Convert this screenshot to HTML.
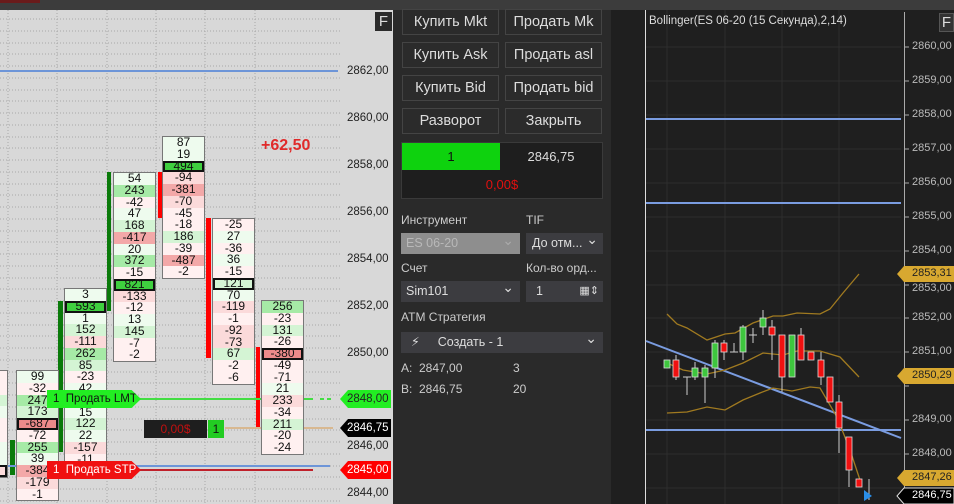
<!DOCTYPE html>
<html><head><meta charset="utf-8"><style>
*{margin:0;padding:0;box-sizing:border-box}
body{width:954px;height:504px;overflow:hidden;background:#2a2a2a;font-family:"Liberation Sans",sans-serif;position:relative}
.a{position:absolute}
#L{left:0;top:10px;width:393px;height:494px;background:#d8d8d8;overflow:hidden}
.cl{position:absolute;width:43px;border:1px solid #777;background:#fff}
.cl div{height:11.75px;line-height:11.75px;font-size:12px;text-align:center;color:#111;white-space:nowrap;overflow:hidden}
.g1{background:#eefbee}.g2{background:#d4f4d4}.g3{background:#a6eaa6}
.r1{background:#fff0f0}.r2{background:#fbdada}.r3{background:#f3a8a8}
.bd{outline:2px solid #111;outline-offset:-2px}
.gb{background:#3fcf3f}.rb{background:#ec8a8a}
.pl{position:absolute;left:347px;font-size:11.5px;color:#222}
.btn{position:absolute;width:97px;height:26px;border:1px solid #444;background:#2b2b2b;color:#ddd;font-size:14.5px;text-align:center;line-height:24px;white-space:nowrap;overflow:hidden}
.lbl{position:absolute;color:#ccc;font-size:12px}
.rl{position:absolute;left:912px;font-size:11px;color:#bbb;white-space:nowrap}
.ord{position:absolute;width:94px;height:18px;font-size:11.5px;line-height:18px;padding-left:6px;white-space:nowrap;clip-path:polygon(0 0,90% 0,100% 50%,90% 100%,0 100%)}
</style></head><body>
<div class="a" style="left:0;top:0;width:954px;height:10px;background:#3c3c3c"></div>
<div class="a" style="left:0;top:0;width:40px;height:3px;background:#6a1b1b"></div>
<div id="L" class="a">
<svg class="a" style="left:0;top:0" width="393" height="494">
<g stroke="#a8a8a8" stroke-dasharray="1 2" stroke-width="1">
<line x1="8" y1="0" x2="8" y2="494"/><line x1="57" y1="0" x2="57" y2="494"/><line x1="107" y1="0" x2="107" y2="494"/><line x1="156" y1="0" x2="156" y2="494"/><line x1="205" y1="0" x2="205" y2="494"/><line x1="255" y1="0" x2="255" y2="494"/>
<line x1="0" y1="9" x2="340" y2="9"/><line x1="0" y1="21" x2="340" y2="21"/><line x1="0" y1="33" x2="340" y2="33"/><line x1="0" y1="44" x2="340" y2="44"/><line x1="0" y1="56" x2="340" y2="56"/><line x1="0" y1="68" x2="340" y2="68"/><line x1="0" y1="80" x2="340" y2="80"/><line x1="0" y1="91" x2="340" y2="91"/><line x1="0" y1="103" x2="340" y2="103"/><line x1="0" y1="115" x2="340" y2="115"/><line x1="0" y1="127" x2="340" y2="127"/><line x1="0" y1="138" x2="340" y2="138"/><line x1="0" y1="150" x2="340" y2="150"/><line x1="0" y1="162" x2="340" y2="162"/><line x1="0" y1="174" x2="340" y2="174"/><line x1="0" y1="185" x2="340" y2="185"/><line x1="0" y1="197" x2="340" y2="197"/><line x1="0" y1="209" x2="340" y2="209"/><line x1="0" y1="221" x2="340" y2="221"/><line x1="0" y1="232" x2="340" y2="232"/><line x1="0" y1="244" x2="340" y2="244"/><line x1="0" y1="256" x2="340" y2="256"/><line x1="0" y1="268" x2="340" y2="268"/><line x1="0" y1="279" x2="340" y2="279"/><line x1="0" y1="291" x2="340" y2="291"/><line x1="0" y1="303" x2="340" y2="303"/><line x1="0" y1="315" x2="340" y2="315"/><line x1="0" y1="326" x2="340" y2="326"/><line x1="0" y1="338" x2="340" y2="338"/><line x1="0" y1="350" x2="340" y2="350"/><line x1="0" y1="362" x2="340" y2="362"/><line x1="0" y1="373" x2="340" y2="373"/><line x1="0" y1="385" x2="340" y2="385"/><line x1="0" y1="397" x2="340" y2="397"/><line x1="0" y1="409" x2="340" y2="409"/><line x1="0" y1="420" x2="340" y2="420"/><line x1="0" y1="432" x2="340" y2="432"/><line x1="0" y1="444" x2="340" y2="444"/><line x1="0" y1="456" x2="340" y2="456"/><line x1="0" y1="467" x2="340" y2="467"/><line x1="0" y1="479" x2="340" y2="479"/><line x1="0" y1="491" x2="340" y2="491"/>
</g>
<line x1="0" y1="61" x2="338" y2="61" stroke="#6d95d8" stroke-width="2"/>
<rect x="10" y="430" width="5" height="35" fill="#0a7a0a"/>
<rect x="58" y="291" width="5" height="151" fill="#0a7a0a"/>
<rect x="107" y="162" width="4" height="139" fill="#0a7a0a"/>
<rect x="158" y="162" width="4" height="46" fill="#f00"/>
<rect x="206" y="208" width="5" height="140" fill="#f00"/>
<rect x="256" y="337" width="4" height="81" fill="#f00"/>
<line x1="140" y1="389" x2="313" y2="389" stroke="#44dd44" stroke-width="2"/>
<line x1="320" y1="389" x2="333" y2="389" stroke="#44dd44" stroke-width="2" stroke-dasharray="4 3"/>
<line x1="0" y1="456" x2="330" y2="456" stroke="#6d95d8" stroke-width="2"/>
<line x1="140" y1="460" x2="313" y2="460" stroke="#c0202a" stroke-width="2"/>
<line x1="225" y1="418" x2="333" y2="418" stroke="#d8b890" stroke-width="2"/>
<polygon points="340,389 348,380 391,380 391,398 348,398" fill="#22ee22"/>
<polygon points="340,418 348,409 391,409 391,427 348,427" fill="#000"/>
<polygon points="340,460 348,451 391,451 391,469 348,469" fill="#f00"/>
</svg>
<div class="a" style="left:0;top:0;width:393px;height:494px">
<div class="cl" style="left:-30px;top:360px;width:38px"><div class="r1">&nbsp;</div><div class="r1">&nbsp;</div><div class="g2">&nbsp;</div><div class="g1">&nbsp;</div><div class="r1">&nbsp;</div><div class="r1">&nbsp;</div><div class="g1">&nbsp;</div><div class="g1">&nbsp;</div><div class="r2 bd">&nbsp;</div></div>
<div class="cl" style="left:16px;top:360px"><div class="g1">99</div><div class="r1">-32</div><div class="g3">247</div><div class="g2">173</div><div class="rb bd">-687</div><div class="r1">-72</div><div class="g3">255</div><div class="g1">39</div><div class="r3">-384</div><div class="r2">-179</div><div class="r1">-1</div></div>
<div class="cl" style="left:64px;top:278px"><div class="g1">3</div><div class="gb bd">593</div><div class="g1">1</div><div class="g2">152</div><div class="r2">-111</div><div class="g3">262</div><div class="g2">85</div><div class="r1">-23</div><div class="g1">42</div><div class="r1">-15</div><div class="g1">15</div><div class="g2">122</div><div class="g1">22</div><div class="r2">-157</div><div class="r1">-11</div></div>
<div class="cl" style="left:113px;top:162px"><div class="g1">54</div><div class="g3">243</div><div class="r1">-42</div><div class="g1">47</div><div class="g2">168</div><div class="r3">-417</div><div class="g1">20</div><div class="g3">372</div><div class="r1">-15</div><div class="gb bd">821</div><div class="r2">-133</div><div class="r1">-12</div><div class="g1">13</div><div class="g2">145</div><div class="r1">-7</div><div class="r1">-2</div></div>
<div class="cl" style="left:162px;top:126px"><div class="g1">87</div><div class="g1">19</div><div class="gb bd">494</div><div class="r2">-94</div><div class="r3">-381</div><div class="r2">-70</div><div class="r1">-45</div><div class="r1">-18</div><div class="g2">186</div><div class="r1">-39</div><div class="r3">-487</div><div class="r1">-2</div></div>
<div class="cl" style="left:212px;top:208px"><div class="r1">-25</div><div class="g1">27</div><div class="r1">-36</div><div class="g1">36</div><div class="r1">-15</div><div class="g2 bd">121</div><div class="g1">70</div><div class="r2">-119</div><div class="r1">-1</div><div class="r2">-92</div><div class="r2">-73</div><div class="g2">67</div><div class="r1">-2</div><div class="r1">-6</div></div>
<div class="cl" style="left:261px;top:290px"><div class="g3">256</div><div class="r1">-23</div><div class="g2">131</div><div class="r1">-26</div><div class="rb bd">-380</div><div class="r1">-49</div><div class="r1">-71</div><div class="g1">21</div><div class="r2">233</div><div class="r1">-34</div><div class="g2">211</div><div class="r1">-20</div><div class="r1">-24</div></div>
</div>
<div class="ord" style="left:47px;top:380px;background:#22ee22;color:#111">1&nbsp; Продать LMT</div>
<div class="ord" style="left:47px;top:451px;background:#f01010;color:#fff">1&nbsp; Продать STP</div>
<div class="a" style="left:144px;top:410px;width:63px;height:18px;background:#1e1e1e;color:#c01010;font-size:12px;text-align:center;line-height:18px">0,00$</div>
<div class="a" style="left:208px;top:410px;width:16px;height:18px;background:#22cc22;color:#111;font-size:12px;text-align:center;line-height:18px">1</div>
<div class="a" style="left:261px;top:127px;color:#e02a2a;font-size:16px;font-weight:bold">+62,50</div>
<div class="a" style="left:375px;top:2px;width:17px;height:19px;background:#2a2a2a;color:#ddd;font-size:15px;text-align:center;line-height:19px">F</div>
<div class="pl" style="top:55px">2862,00</div>
<div class="pl" style="top:102px">2860,00</div>
<div class="pl" style="top:149px">2858,00</div>
<div class="pl" style="top:196px">2856,00</div>
<div class="pl" style="top:243px">2854,00</div>
<div class="pl" style="top:290px">2852,00</div>
<div class="pl" style="top:337px">2850,00</div>
<div class="pl" style="top:383px">2848,00</div>
<div class="pl" style="top:412px;color:#fff">2846,75</div>
<div class="pl" style="top:430px">2846,00</div>
<div class="pl" style="top:454px;color:#fff">2845,00</div>
<div class="pl" style="top:477px">2844,00</div>
</div>
<div class="btn" style="left:402px;top:9px">Купить Mkt</div>
<div class="btn" style="left:505px;top:9px">Продать Mk</div>
<div class="btn" style="left:402px;top:42px">Купить Ask</div>
<div class="btn" style="left:505px;top:42px">Продать asl</div>
<div class="btn" style="left:402px;top:75px">Купить Bid</div>
<div class="btn" style="left:505px;top:75px">Продать bid</div>
<div class="btn" style="left:402px;top:108px">Разворот</div>
<div class="btn" style="left:505px;top:108px">Закрыть</div>
<div class="a" style="left:401px;top:142px;width:202px;height:57px;background:#1e1e1e;border:1px solid #3a3a3a"></div>
<div class="a" style="left:402px;top:143px;width:98px;height:27px;background:#0ed20e;color:#111;font-size:13px;text-align:center;line-height:27px">1</div>
<div class="a" style="left:500px;top:143px;width:102px;height:27px;color:#ddd;font-size:13px;text-align:center;line-height:27px">2846,75</div>
<div class="a" style="left:402px;top:171px;width:200px;height:27px;color:#e01010;font-size:13px;text-align:center;line-height:27px">0,00$</div>
<div class="lbl" style="left:401px;top:213px">Инструмент</div>
<div class="lbl" style="left:526px;top:213px">TIF</div>
<div class="a" style="left:401px;top:233px;width:119px;height:21px;background:#8e8e8e;color:#b8b8b8;font-size:12.5px;line-height:21px;padding-left:5px">ES 06-20<span style="position:absolute;right:6px;top:-3px;color:#aaa;font-size:14px">&#8964;</span></div>
<div class="a" style="left:526px;top:233px;width:77px;height:21px;background:#3c3c40;color:#ddd;font-size:12.5px;line-height:21px;padding-left:6px">До отм...<span style="position:absolute;right:5px;top:-4px;font-size:14px">&#8964;</span></div>
<div class="lbl" style="left:401px;top:261px">Счет</div>
<div class="lbl" style="left:526px;top:261px">Кол-во орд...</div>
<div class="a" style="left:401px;top:281px;width:119px;height:21px;background:#3c3c40;color:#ddd;font-size:12.5px;line-height:21px;padding-left:5px">Sim101<span style="position:absolute;right:6px;top:-4px;font-size:14px">&#8964;</span></div>
<div class="a" style="left:526px;top:281px;width:77px;height:21px;background:#3c3c40;color:#ddd;font-size:12.5px;line-height:21px;padding-left:10px">1<span style="position:absolute;right:4px;font-size:11px">&#9638;&#8661;</span></div>
<div class="lbl" style="left:401px;top:310px">ATM Стратегия</div>
<div class="a" style="left:401px;top:332px;width:202px;height:21px;background:#3c3c40;color:#ddd;font-size:12.5px;line-height:21px;padding-left:10px">&#9889;&#xFE0E;<span style="margin-left:18px">Создать - 1</span><span style="position:absolute;right:6px;top:-4px;font-size:14px">&#8964;</span></div>
<div class="lbl" style="left:401px;top:361px">A:&nbsp; 2847,00</div><div class="lbl" style="left:513px;top:361px">3</div>
<div class="lbl" style="left:401px;top:382px">B:&nbsp; 2846,75</div><div class="lbl" style="left:513px;top:382px">20</div>
<div class="a" style="left:611px;top:10px;width:343px;height:494px;background:#1f1f1f"></div>
<svg class="a" style="left:0;top:0" width="954" height="504">
<g stroke="#2e2e2e" stroke-width="1">
<line x1="667" y1="10" x2="667" y2="504"/><line x1="725" y1="10" x2="725" y2="504"/><line x1="782" y1="10" x2="782" y2="504"/><line x1="839" y1="10" x2="839" y2="504"/>
<line x1="646" y1="47" x2="901" y2="47"/><line x1="646" y1="81" x2="901" y2="81"/><line x1="646" y1="115" x2="901" y2="115"/><line x1="646" y1="149" x2="901" y2="149"/><line x1="646" y1="183" x2="901" y2="183"/><line x1="646" y1="217" x2="901" y2="217"/><line x1="646" y1="251" x2="901" y2="251"/><line x1="646" y1="285" x2="901" y2="285"/><line x1="646" y1="318" x2="901" y2="318"/><line x1="646" y1="352" x2="901" y2="352"/><line x1="646" y1="386" x2="901" y2="386"/><line x1="646" y1="420" x2="901" y2="420"/><line x1="646" y1="454" x2="901" y2="454"/><line x1="646" y1="488" x2="901" y2="488"/>
</g>
<line x1="645.5" y1="10" x2="645.5" y2="504" stroke="#ddd"/>
<line x1="904.5" y1="12" x2="904.5" y2="504" stroke="#aaa"/>
<g stroke="#aaa"><line x1="904" y1="47" x2="909" y2="47"/><line x1="904" y1="81" x2="909" y2="81"/><line x1="904" y1="115" x2="909" y2="115"/><line x1="904" y1="149" x2="909" y2="149"/><line x1="904" y1="183" x2="909" y2="183"/><line x1="904" y1="217" x2="909" y2="217"/><line x1="904" y1="251" x2="909" y2="251"/><line x1="904" y1="285" x2="909" y2="285"/><line x1="904" y1="318" x2="909" y2="318"/><line x1="904" y1="352" x2="909" y2="352"/><line x1="904" y1="386" x2="909" y2="386"/><line x1="904" y1="420" x2="909" y2="420"/><line x1="904" y1="454" x2="909" y2="454"/></g>
<g stroke="#7a9ce0" stroke-width="2"><line x1="646" y1="119" x2="901" y2="119"/><line x1="646" y1="203" x2="901" y2="203"/><line x1="646" y1="430" x2="901" y2="430"/><line x1="646" y1="341" x2="901" y2="438"/></g>
<g fill="none" stroke="#a07a20" stroke-width="1.3">
<polyline points="667,314 677,324 687,328 707,340 725,334 735,333 753,323 773,316 783,316 797,313 820,314 830,309 843,293 859,274"/>
<polyline points="667,363 683,370 707,374 725,370 743,363 763,353 783,355 797,351 820,351 840,357 859,377"/>
<polyline points="667,413 687,412 707,407 725,410 743,400 760,393 773,388 792,391 810,387 820,388 837,417 850,450 860,480"/>
</g>
<g stroke="#ccc" stroke-width="1">
<line x1="676" y1="355" x2="676" y2="380"/><line x1="687" y1="377" x2="687" y2="395"/><line x1="695" y1="362" x2="695" y2="380"/><line x1="705" y1="365" x2="705" y2="403"/><line x1="715" y1="340" x2="715" y2="378"/><line x1="724" y1="340" x2="724" y2="360"/><line x1="734" y1="343" x2="734" y2="352"/><line x1="743" y1="325" x2="743" y2="360"/><line x1="753" y1="328" x2="753" y2="343"/><line x1="763" y1="310" x2="763" y2="335"/><line x1="772" y1="320" x2="772" y2="360"/><line x1="782" y1="335" x2="782" y2="392"/><line x1="801" y1="328" x2="801" y2="360"/><line x1="821" y1="352" x2="821" y2="385"/><line x1="839" y1="395" x2="839" y2="453"/><line x1="849" y1="437" x2="849" y2="487"/><line x1="869" y1="479" x2="869" y2="500"/>
<line x1="683" y1="377" x2="691" y2="377"/><line x1="730" y1="352" x2="738" y2="352"/><line x1="749" y1="335" x2="757" y2="335"/>
</g>
<g stroke="#ddd" stroke-width="0.8">
<rect x="664" y="360" width="6" height="8" fill="#3ec63e"/><rect x="692" y="368" width="6" height="9" fill="#3ec63e"/><rect x="702" y="368" width="6" height="9" fill="#3ec63e"/><rect x="712" y="343" width="6" height="25" fill="#3ec63e"/><rect x="740" y="327" width="6" height="25" fill="#3ec63e"/><rect x="760" y="318" width="6" height="9" fill="#3ec63e"/><rect x="789" y="335" width="6" height="42" fill="#3ec63e"/>
<rect x="673" y="360" width="6" height="17" fill="#f01010"/><rect x="721" y="343" width="6" height="9" fill="#f01010"/><rect x="769" y="327" width="6" height="8" fill="#f01010"/><rect x="779" y="335" width="6" height="42" fill="#f01010"/><rect x="798" y="335" width="6" height="25" fill="#f01010"/><rect x="808" y="352" width="6" height="8" fill="#f01010"/><rect x="818" y="360" width="6" height="17" fill="#f01010"/><rect x="827" y="377" width="6" height="25" fill="#f01010"/><rect x="836" y="402" width="6" height="26" fill="#f01010"/><rect x="846" y="437" width="6" height="33" fill="#f01010"/><rect x="856" y="479" width="6" height="8" fill="#f01010"/>
</g>
<polygon points="864,490 872,496 864,501" fill="#2a8ee8"/>
<polygon points="897,274 904,266 954,266 954,282 904,282" fill="#d8a830"/>
<polygon points="897,376 904,368 954,368 954,384 904,384" fill="#d8a830"/>
<polygon points="897,478 904,470 954,470 954,486 904,486" fill="#d8a830"/>
<polygon points="897,496 904,488 954,488 954,504 904,504" fill="#000" stroke="#ddd"/>
</svg>
<div class="a" style="left:649px;top:15px;color:#ddd;font-size:11.5px">Bollinger(ES 06-20 (15 Секунда),2,14)</div>
<div class="a" style="left:939px;top:13px;width:15px;height:19px;background:#333;border:1px solid #555;color:#ddd;font-size:15px;text-align:center;line-height:18px">F</div>
<div class="rl" style="top:40px">2860,00</div><div class="rl" style="top:74px">2859,00</div><div class="rl" style="top:108px">2858,00</div><div class="rl" style="top:142px">2857,00</div><div class="rl" style="top:176px">2856,00</div><div class="rl" style="top:210px">2855,00</div><div class="rl" style="top:244px">2854,00</div><div class="rl" style="top:282px">2853,00</div><div class="rl" style="top:311px">2852,00</div><div class="rl" style="top:345px">2851,00</div><div class="rl" style="top:413px">2849,00</div><div class="rl" style="top:447px">2848,00</div>
<div class="rl" style="top:267px;color:#222">2853,31</div>
<div class="rl" style="top:369px;color:#222">2850,29</div>
<div class="rl" style="top:471px;color:#222">2847,26</div>
<div class="rl" style="top:489px;color:#fff">2846,75</div>
</body></html>
